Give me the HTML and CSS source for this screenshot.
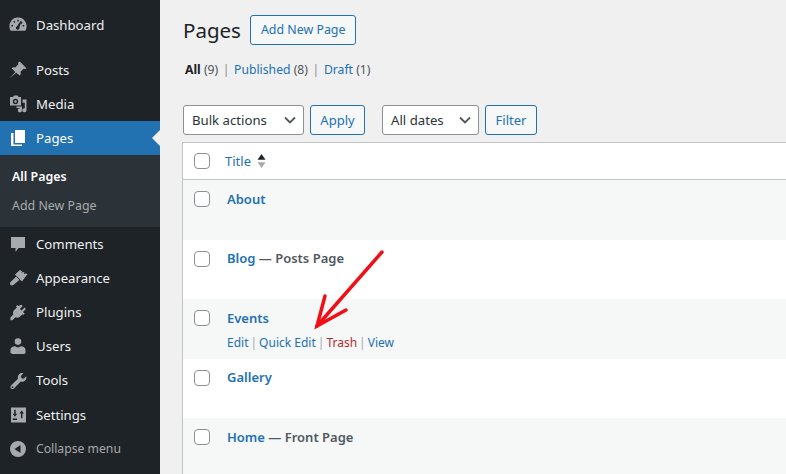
FILE: index.html
```html
<!DOCTYPE html>
<html lang="en">
<head>
<meta charset="utf-8">
<title>Pages</title>
<link rel="stylesheet" href="styles.css">
</head>
<body>
<div class="admin">
  <nav class="sidebar">
    <a class="item dash"><svg class="ico" viewBox="0 0 20 20"><path d="M10 2.600a8.600 8.600 0 0 0-7.300 13.100h14.600A8.600 8.600 0 0 0 10 2.600zM5 11.500H3.400v-1.400H5zm1.400-3.600-1.100-1.100 1-1 1.100 1.100zm2.900-1.500V4.800h1.400v1.600zm2.300 6.100a1.900 1.900 0 0 1-3.600 1.100 1.900 1.900 0 0 1 1.100-2.400l3.600-5.400.9.400-2.200 6.100c.1.200.2.400.2.700zm1-4.600 1.100-1.100 1 1-1.100 1.100zm2 3.600v-1.400h1.600v1.400z" fill-rule="evenodd"/></svg><span>Dashboard</span></a>
    <a class="item"><svg class="ico" viewBox="0 0 20 20"><path d="M11.800 1.600 18.400 8.200l-1.500 1-1-.7-3.400 3.200c.5 1.500.3 2.800-.7 3.700L8.100 12.700 1.500 18.500l5.800-6.600-3.700-3.700c.9-1 2.200-1.200 3.700-.7l3.200-3.400-.7-1z"/></svg><span>Posts</span></a>
    <a class="item"><svg class="ico" viewBox="0 0 20 20"><path d="M2 3h3l1-1.500h3.500L10.500 3H13v8.500H2zm5.500 1.800a2.700 2.700 0 1 0 0 5.400 2.700 2.700 0 0 0 0-5.400zm0 1.400a1.300 1.300 0 1 1 0 2.600 1.300 1.300 0 0 1 0-2.600z" fill-rule="evenodd"/><path d="M14.500 5.500H18.500V16.200a2.100 2.100 0 1 1-1.700-2V8.800H14.500z"/><path d="M8.500 12.500h5.500v3.800a2.100 2.100 0 1 1-1.700-2v-.3H8.500z"/></svg><span>Media</span></a>
    <a class="item current"><svg class="ico" viewBox="0 0 20 20"><path d="M7 2h10v13H7z"/><path d="M3 5h2.500v11.500H14V18H3z"/></svg><span>Pages</span></a>
    <div class="submenu">
      <a class="sub on">All Pages</a>
      <a class="sub">Add New Page</a>
    </div>
    <a class="item"><svg class="ico" viewBox="0 0 20 20"><path d="M3 3h14v11h-6.500L7.500 18v-4H3z"/></svg><span>Comments</span></a>
    <a class="item"><svg class="ico" viewBox="0 0 20 20"><path d="M7 6.500 12 2l2 1.200-.6 1.600 1.800-.9 1.300.7-.7 1.500 2-.6L19.500 6 14 13.500z"/><path d="M8.200 8.600l3.200 3.300-5.800 4.900c-.9.800-2.300.8-3.100 0-.8-.8-.7-2 .1-2.800z"/></svg><span>Appearance</span></a>
    <a class="item"><svg class="ico" viewBox="0 0 20 20"><path d="M13.300 2.800 14.700 4 11.900 7.100l1.700 1.500 2.900-3 1.400 1.300-3 3 1.800 1.700-1.300 1.400-.9-.8-2.900 2.800c-1.400.9-3 .9-4.200.2l-3 3H2.400v-2.700l3-2.900c-.6-1.300-.5-2.900.4-4.200l3-2.900-.8-.9L9.300 2.900l1.100 1.200z"/></svg><span>Plugins</span></a>
    <a class="item"><svg class="ico" viewBox="0 0 20 20"><circle cx="10" cy="5.600" r="3.300"/><path d="M2.500 17v-3.300c0-1.800 2.500-3.400 4.500-3.400 1.700 1.500 4.300 1.500 6 0 2 0 4.500 1.600 4.500 3.400V17c0 .5-1 .9-2 .9H4.500c-1 0-2-.4-2-.9z"/></svg><span>Users</span></a>
    <a class="item"><svg class="ico" viewBox="0 0 20 20"><path d="M18.300 5.200c.4 1.500 0 3.200-1.200 4.300-1.200 1.200-2.900 1.500-4.400 1l-6.700 7c-.8.800-2.200.8-3 0s-.8-2.200 0-3l7-6.700c-.5-1.500-.2-3.200 1-4.400 1.100-1.200 2.800-1.600 4.300-1.200L12.900 5l.6 2.200 2.100.6zM4.500 15.200a.9.9 0 1 0 0 1.800.9.9 0 0 0 0-1.800z" fill-rule="evenodd"/></svg><span>Tools</span></a>
    <a class="item"><svg class="ico" viewBox="0 0 20 20"><path d="M3 2.500h15v15H3zm3.200 2.300v4H4.600l2.300 3 2.300-3H7.700v-4zm6.800 1.500v7h1.400V8.600h1.600l-2.300-3-2.300 3h1.600zM4.800 13.500v1.400h4.200v-1.400z" fill-rule="evenodd"/></svg><span>Settings</span></a>
    <a class="item collapse"><svg class="ico" viewBox="0 0 20 20"><path d="M10 2a8 8 0 1 0 0 16 8 8 0 0 0 0-16zm2.500 4v8L6.500 10z" fill-rule="evenodd"/></svg><span>Collapse menu</span></a>
  </nav>

  <main class="content">
    <header class="heading">
      <h1>Pages</h1>
      <a class="btn add">Add New Page</a>
    </header>
    <ul class="views">
      <li><b>All</b> <i>(9)</i></li>
      <li class="sep">|</li>
      <li><a>Published</a> <i>(8)</i></li>
      <li class="sep">|</li>
      <li><a>Draft</a> <i>(1)</i></li>
    </ul>
    <div class="filters">
      <div class="select bulk">Bulk actions<svg viewBox="0 0 12 8"><path d="M1 1.500 6 6.500l5-5"/></svg></div>
      <a class="btn apply">Apply</a>
      <div class="select dates">All dates<svg viewBox="0 0 12 8"><path d="M1 1.500 6 6.500l5-5"/></svg></div>
      <a class="btn filter">Filter</a>
    </div>
    <section class="table">
      <div class="row head">
        <span class="check"></span>
        <a class="title">Title</a>
        <svg class="sort" viewBox="0 0 10 18"><path class="up" d="M5 1 9.500 7.500H.5z"/><path class="down" d="M5 17 9.500 10.500H.5z"/></svg>
      </div>
      <div class="row alt"><span class="check"></span><div><strong><a>About</a></strong></div></div>
      <div class="row"><span class="check"></span><div><strong><a>Blog</a> — Posts Page</strong></div></div>
      <div class="row alt"><span class="check"></span><div>
        <strong><a>Events</a></strong>
        <p class="actions"><a>Edit</a><s>|</s><a>Quick Edit</a><s>|</s><a class="trash">Trash</a><s>|</s><a>View</a></p>
      </div></div>
      <div class="row"><span class="check"></span><div><strong><a>Gallery</a></strong></div></div>
      <div class="row alt"><span class="check"></span><div><strong><a>Home</a> — Front Page</strong></div></div>
    </section>
    <svg class="arrow" viewBox="0 0 80 90"><path d="M68 3 3 77"/><path d="M11 47 3 77 32 61"/></svg>
  </main>
</div>
</body>
</html>
```
FILE: styles.css
```css
* { box-sizing: border-box; }
html, body { margin: 0; height: 100%; overflow: hidden; }
body { font: 13px/1.4 "Noto Sans", "Open Sans", sans-serif; color: #3c434a; background: #f0f0f1; }
a { color: #2271b1; text-decoration: none; }

.admin { display: flex; height: 474px; }

.sidebar { flex: 0 0 160px; background: #1d2327; padding-top: 8px; color: #f0f0f1; }
.item { display: flex; align-items: center; height: 34.2px; padding-left: 8px; color: #f0f0f1; position: relative; font-size: 13.2px; }
.item span { margin-left: 8px; }
.dash { margin-bottom: 10.500px; }
.ico { width: 20px; height: 20px; fill: #a7aaad; flex: none; }
.current { background: #2271b1; color: #fff; }
.current .ico { fill: #fff; }
.current::after { content: ""; position: absolute; right: 0; top: 9px; border: 8px solid transparent; border-right-color: #f0f0f1; border-left-width: 0; }
.collapse { color: #a7aaad; font-size: 12.200px; }
.submenu { background: #2c3338; padding: 8px 0 6px; height: 71.500px; display: flex; flex-direction: column; }
.sub { padding-left: 12px; height: 29px; line-height: 28px; font-size: 12.400px; color: #a7aaad; }
.sub.on { color: #fff; font-weight: 600; }

.content { flex: 1; min-width: 0; padding: 0 0 0 23px; position: relative; }
.heading { display: flex; align-items: center; gap: 9px; padding-top: 15px; margin-bottom: 14px; box-sizing: content-box; height: 30px; }
h1 { margin: 0; font-size: 20.500px; font-weight: 400; color: #1d2327; line-height: 30px; }
.btn { display: inline-flex; align-items: center; justify-content: center; height: 30px; border: 1px solid #2271b1; border-radius: 3px; background: #f6f7f7; color: #2271b1; font-size: 13px; padding: 0 10px; }
.add { font-size: 12.400px; }

.views { display: flex; gap: 4.600px; list-style: none; margin: 0; padding: 0 0 0 2px; height: 21px; font-size: 12.200px; line-height: 21px; }
.views b { color: #1d2327; font-weight: 700; }
.views i { font-style: normal; color: #50575e; }
.sep { color: #8c8f94; }

.filters { display: flex; align-items: center; margin-top: 25px; height: 30px; }
.filters .btn { margin-left: 6px; }
.select { display: flex; align-items: center; justify-content: space-between; height: 30px; border: 1px solid #8c8f94; border-radius: 3px; background: #fff; padding: 0 7px 0 8px; color: #2c3338; font-size: 13.200px; }
.select svg { width: 12px; height: 8px; fill: none; stroke: #50575e; stroke-width: 1.800; }
.bulk { width: 121px; }
.dates { width: 97px; margin-left: 17px; }
.apply { width: 55px; padding: 0; }
.filter { width: 52px; padding: 0; }

.table { margin-top: 7px; margin-left: -1px; background: #fff; border: 1px solid #c3c4c7; border-right: 0; border-bottom: 0; }
.row { display: flex; height: 59.500px; padding: 9.500px 0 0 11px; gap: 17px; font-size: 13px; }
.row strong { font-weight: 600; color: #50575e; display: block; }
.row strong a { color: #2271b1; }
.alt { background: #f6f7f7; }
.head { height: 37px; align-items: center; padding: 0 0 0 11px; border-bottom: 1px solid #c3c4c7; gap: 0; }
.head .title { margin-left: 15px; }
.sort { width: 9px; height: 16px; margin-left: 6px; }
.up { fill: #1d2327; }
.down { fill: #a7aaad; }
.check { flex: none; width: 16px; height: 16px; margin-top: 1.500px; background: #fff; border: 1px solid #8c8f94; border-radius: 4px; }
.head .check { margin-top: 0; }
.actions { display: flex; gap: 2px; margin: 7px 0 0; font-size: 12px; line-height: 18px; }
.actions s { text-decoration: none; color: #a7aaad; }
.trash { color: #b32d2e; }

.arrow { position: absolute; left: 154px; top: 249px; width: 80px; height: 90px; fill: none; stroke: #f00e17; stroke-width: 3.500; stroke-linecap: round; stroke-linejoin: miter; }
```
